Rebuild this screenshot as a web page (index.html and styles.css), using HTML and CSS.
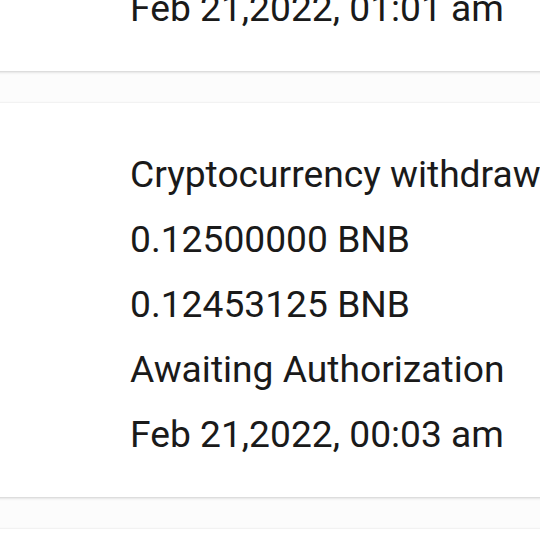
FILE: index.html
```html
<!DOCTYPE html>
<html>
<head>
<meta charset="utf-8">
<link rel="stylesheet" href="styles.css">
</head>
<body>
<div class="list">
  <div class="card card-partial">
    <div class="line">Feb 21,2022, 01:01 am</div>
  </div>
  <div class="card">
    <div class="line">Cryptocurrency withdrawal</div>
    <div class="line">0.12500000 BNB</div>
    <div class="line">0.12453125 BNB</div>
    <div class="line">Awaiting Authorization</div>
    <div class="line">Feb 21,2022, 00:03 am</div>
  </div>
  <div class="card">
    <div class="line">Cryptocurrency withdrawal</div>
  </div>
</div>
</body>
</html>
```
FILE: styles.css
```css
html, body {
  margin: 0;
  padding: 0;
  background: #fcfcfc;
  overflow: hidden;
  width: 540px;
  height: 540px;
}
body {
  font-family: Roboto, "Liberation Sans", sans-serif;
  color: #1a1a1a;
}
.list {
  display: flex;
  flex-direction: column;
  gap: 32px;
  margin-top: -24px;
  margin-left: -4px;
  margin-right: -4px;
}
.card {
  background: #ffffff;
  padding: 39px 0 30px 134px;
  box-shadow: 0 1px 3px rgba(0,0,0,0.18), 0 0 1px rgba(0,0,0,0.08);
  white-space: nowrap;
}
.card-partial {
  padding-top: 0;
}
.line {
  font-size: 37.2px;
  line-height: 65px;
}
```
